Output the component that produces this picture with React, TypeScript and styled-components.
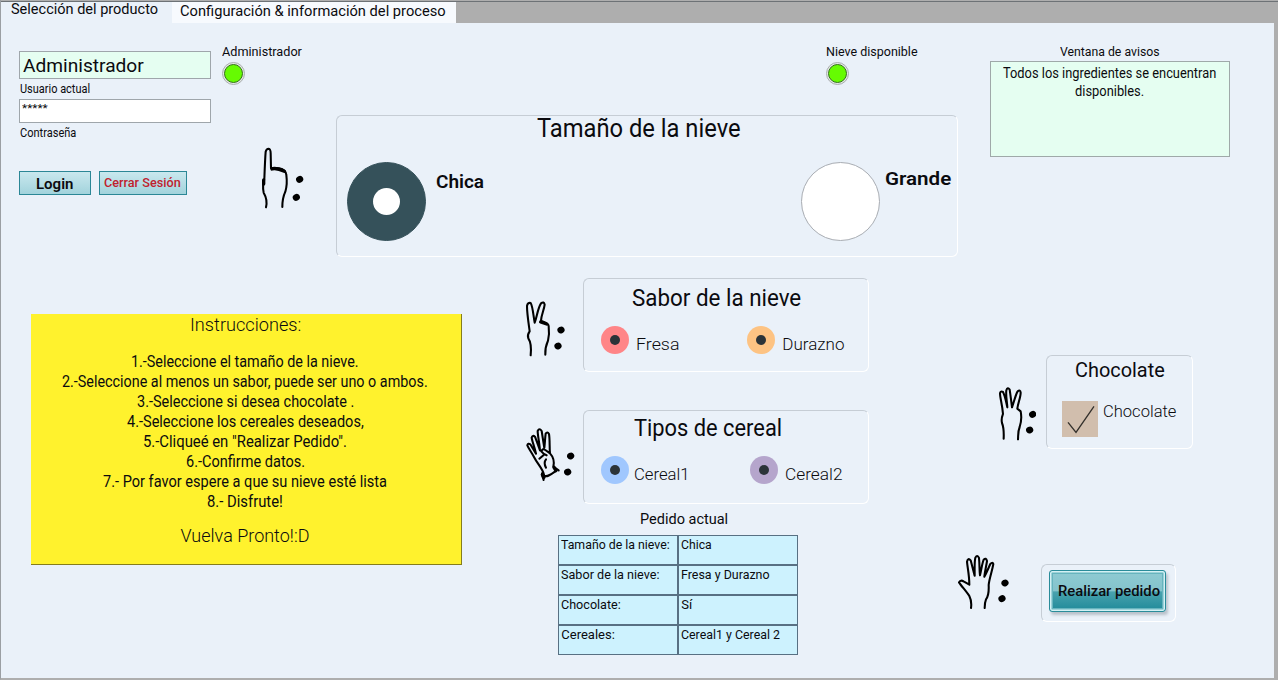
import React, { useLayoutEffect, useRef, useState } from 'react';
import styled, { createGlobalStyle } from 'styled-components';

const GlobalStyle = createGlobalStyle`
  *, *::before { box-sizing: border-box; }
  body {
    margin: 0;
    background: #ffffff;
    color: #0b0b0f;
    font-family: Roboto, "Liberation Sans", sans-serif;
    overflow: hidden;
  }
  button { font-family: inherit; }
`;

/* ---------- text fitted to a label width ---------- */

const LabelBox = styled.span<{ $w: number; $lh: number; $size: number; $weight: number; $color: string }>`
  display: block;
  flex: none;
  width: ${p => p.$w}px;
  height: ${p => p.$lh}px;
  line-height: ${p => p.$lh}px;
  font-size: ${p => p.$size}px;
  font-weight: ${p => p.$weight};
  color: ${p => p.$color};
  text-align: left;
`;

const LabelInk = styled.span`
  display: inline-block;
  vertical-align: top;
  white-space: pre;
  transform-origin: 0 50%;
`;

type LabelProps = { children: string; w: number; lh: number; size: number; weight?: number; color?: string };

function Label({ children, w, lh, size, weight = 400, color = '#0b0b0f' }: LabelProps) {
  const ink = useRef<HTMLSpanElement>(null);
  const [scale, setScale] = useState(1);
  useLayoutEffect(() => {
    if (ink.current && ink.current.offsetWidth) {
      setScale(w / ink.current.offsetWidth);
    }
  }, [w, children]);
  return (
    <LabelBox $w={w} $lh={lh} $size={size} $weight={weight} $color={color}>
      <LabelInk ref={ink} style={{ transform: `scaleX(${scale})` }}>{children}</LabelInk>
    </LabelBox>
  );
}

/* ---------- window and tabs ---------- */

const Window = styled.div`
  width: 1278px;
  height: 681px;
  background: #fff;
`;

const TabBar = styled.nav`
  display: flex;
  height: 23px;
  padding-top: 1px;
  border-left: 1px solid #9b9fa3;
  background: #aeaeae;
`;

const Tab = styled.div<{ $w: number; $pad: number; $active?: boolean }>`
  width: ${p => p.$w}px;
  height: 22px;
  border-top: 1px solid #6d7276;
  padding-left: ${p => p.$pad}px;
  background: ${p => (p.$active ? '#eaf1f9' : '#f7fafe')};
  overflow: hidden;
`;

const TabRest = styled.div`
  flex: 1;
  border-top: 1px solid #6d7276;
`;

const Body = styled.main`
  height: 657px;
  border: solid #aeaeae;
  border-width: 0 4px 2px 1px;
  border-left-color: #9b9fa3;
  background: #eaf1f9;
`;

const UpperArea = styled.div`
  display: flex;
  align-items: flex-start;
  height: 234px;
  padding-left: 18px;
`;

const LowerArea = styled.div`
  display: flex;
  align-items: flex-start;
  padding-left: 30px;
`;

/* ---------- session ---------- */

const LoginColumn = styled.section`
  width: 192px;
  padding-top: 28px;
`;

const Field = styled.div<{ $h: number; $green?: boolean; $pad: string }>`
  height: ${p => p.$h}px;
  padding: ${p => p.$pad};
  border: 1px solid #9fa6ab;
  background: ${p => (p.$green ? '#e5fef1' : '#fff')};
`;

const Caption = styled.div`
  padding-left: 1.3px;
`;

const ButtonRow = styled.div`
  display: flex;
  gap: 8px;
  margin-top: 29px;
`;

const SessionButton = styled.button<{ $w: number; $drop: number }>`
  display: flex;
  justify-content: center;
  align-items: center;
  width: ${p => p.$w}px;
  height: 24px;
  padding: ${p => p.$drop}px 1px 0 0;
  border: 1px solid #2b8796;
  background: linear-gradient(#c9e8ee, #a2d3dc);
`;

/* ---------- indicators ---------- */

const StatusColumn = styled.section`
  width: 114px;
  margin-left: 11px;
  padding-top: 21px;
`;

const Indicator = styled.div`
  padding-left: 0;
`;

const Led = styled.div`
  width: 23px;
  height: 23px;
  margin-top: 2px;
  padding: 1px;
  border: 1px solid #a9adb0;
  border-radius: 50%;
  background: #e4e9e4;

  &::before {
    content: '';
    display: block;
    width: 19px;
    height: 19px;
    border: 1px solid #33701a;
    border-radius: 50%;
    background: #66fb02;
  }
`;

/* ---------- group panels ---------- */

const Panel = styled.section<{ $w: number; $h: number }>`
  flex: none;
  width: ${p => p.$w}px;
  height: ${p => p.$h}px;
  border: 1px solid;
  border-color: #c6cdd5 #fff #fff #c6cdd5;
  border-radius: 6px;
`;

const PanelTitle = styled.div<{ $left: number }>`
  padding-left: ${p => p.$left}px;
`;

const SizeColumn = styled.div`
  width: 622px;
  padding-top: 21px;
`;

const SnowIndicator = styled(Indicator)`
  height: 71px;
  padding-left: 490px;
`;

const SizeOptions = styled.div`
  display: flex;
  justify-content: space-between;
  margin-top: 20px;
  padding: 0 6px 0 10px;
`;

const Option = styled.div<{ $gap: number; $drop: number; $left?: number }>`
  display: flex;
  align-items: flex-start;
  gap: ${p => p.$gap}px;
  margin-left: ${p => p.$left ?? 0}px;

  > span { margin-top: ${p => p.$drop}px; }
`;

const BigRadio = styled.div<{ $on?: boolean }>`
  display: grid;
  place-items: center;
  width: 79px;
  height: 79px;
  border: 1px solid ${p => (p.$on ? '#35515a' : '#a9adb3')};
  border-radius: 50%;
  background: ${p => (p.$on ? '#35515a' : '#fff')};

  &::before {
    content: '';
    width: 27px;
    height: 27px;
    border-radius: 50%;
    background: #fff;
  }
`;

const SmallRadio = styled.div<{ $color: string }>`
  display: grid;
  place-items: center;
  width: 28px;
  height: 28px;
  border-radius: 50%;
  background: ${p => p.$color};

  &::before {
    content: '';
    width: 10px;
    height: 10px;
    border-radius: 50%;
    background: #2b3338;
  }
`;

const OptionRow = styled.div<{ $top: number; $left: number }>`
  display: flex;
  margin-top: ${p => p.$top}px;
  padding-left: ${p => p.$left}px;
`;

/* ---------- notices ---------- */

const NoticeColumn = styled.section`
  display: flex;
  flex-direction: column;
  align-items: center;
  width: 240px;
  margin-left: 32px;
  padding-top: 21px;
`;

const NoticeBox = styled.div`
  display: flex;
  flex-direction: column;
  align-items: center;
  width: 240px;
  height: 96px;
  margin-top: 1px;
  padding: 2px 2px 0 0;
  border: 1px solid #9fa9a9;
  background: #e5fef1;
`;

/* ---------- instructions ---------- */

const Instructions = styled.section`
  display: flex;
  flex-direction: column;
  align-items: center;
  flex: none;
  width: 431px;
  height: 251px;
  margin-top: 57px;
  padding-right: 2px;
  border: solid #857d1b;
  border-width: 0 1px 1px 0;
  background: #fff22d;
`;

const Steps = styled.div`
  display: flex;
  flex-direction: column;
  align-items: center;
  margin: 17px 0 13px;
`;

/* ---------- centre and right columns ---------- */

const CenterColumn = styled.div`
  width: 345px;
  margin-left: 62.7px;
  padding-top: 21px;
`;

const RightColumn = styled.div`
  margin-left: 87px;
  padding-top: 98px;
`;

const StepRow = styled.div<{ $top?: number; $left?: number }>`
  display: flex;
  align-items: flex-start;
  margin-top: ${p => p.$top ?? 0}px;
  margin-left: ${p => p.$left ?? 0}px;
`;

const HandSlot = styled.div<{ $w: number; $top: number; $left?: number }>`
  flex: none;
  width: ${p => p.$w}px;
  padding: ${p => p.$top}px 0 0 ${p => p.$left ?? 0}px;

  svg { display: block; }
`;

const OrderTitle = styled.div`
  padding: 5.4px 0 6.1px 115.2px;
`;

const OrderTable = styled.div`
  display: grid;
  grid-template-columns: 120px 120px;
  grid-auto-rows: 30px;
  width: 240px;
  margin-left: 33.3px;
`;

const Cell = styled.div`
  padding-left: 2.3px;
  border: 1px solid #587083;
  background: #cdf2fe;
`;

const Checkbox = styled.div`
  width: 36px;
  height: 36px;
  background: #d1bead;

  svg { display: block; }
`;

const OrderButton = styled.button`
  display: flex;
  justify-content: center;
  align-items: center;
  width: 117px;
  height: 42px;
  margin: 5px 0 0 7px;
  padding: 0 0 0 3px;
  border: 1px solid #2a8c9a;
  border-radius: 3px;
  background: linear-gradient(#8fcbd3 0%, #84c3cc 50%, #49a2ae 52%, #1f8a99 100%);
  box-shadow: inset 0 0 0 1.5px #d3f1f4, inset 0 0 0 3px #67b4be, 2px 3px 3px #b9c1ca;
`;

/* ---------- hand drawings ---------- */

type HandProps = { box: [number, number, number, number]; lines: string; heavy?: string; dots: [number, number][] };

function Hand({ box, lines, heavy, dots }: HandProps) {
  return (
    <svg width={box[2] / 3} height={box[3] / 3} viewBox={box.join(' ')} fill="none" stroke="#000" strokeLinecap="round" strokeLinejoin="round">
      <path d={lines} strokeWidth="6.2" />
      {heavy && <path d={heavy} strokeWidth="10" />}
      {dots.map(([x, y]) => (
        <ellipse key={y} cx={x} cy={y} rx="11" ry="10" fill="#000" stroke="none" transform={`rotate(-30 ${x} ${y})`} />
      ))}
    </svg>
  );
}

const OneFinger = () => (
  <Hand
    box={[60, 138, 135, 192]}
    lines="M78 322C82 305 78 290 71 278C68 262 68 250 73 238C74 210 75 180 77 155Q79 146 86 146Q92 147 92 160L93 205C100 202 108 203 118 205C128 207 138 213 139 225C141 240 141 258 136 275C129 290 127 305 127 321"
    heavy="M96 207C106 204 120 208 133 214M71 240L71 252"
    dots={[[179, 238], [169, 292]]}
  />
);

const TwoFingers = () => (
  <Hand
    box={[74, 90, 123, 174]}
    lines="M91 256C93 235 91 215 84 205C80 195 84 190 88 184C84 155 80 130 80 108Q82 97 91 99C97 108 99 135 103 158C110 140 112 115 122 100Q131 93 133 104C131 120 123 135 122 152C130 157 144 158 145 168C147 185 146 200 143 212C136 228 134 240 135 254"
    heavy="M121 156L139 162"
    dots={[[182, 180], [173, 228]]}
  />
);

const ThreeFingers = () => (
  <Hand
    box={[18, 14, 116, 166]}
    lines="M35 172C36 150 34 135 30 125C27 112 30 106 33 98C31 70 24 50 24 36Q26 28 33 32C40 45 42 62 46 78C45 60 41 42 43 27Q47 16 53 25C56 45 58 62 60 78C66 62 70 42 77 30Q85 24 86 34C86 48 78 65 76 82L86 90C90 110 88 122 83 137C77 152 79 162 78 174"
    dots={[[122, 99], [113, 146]]}
  />
);

const FourFingers = () => (
  <Hand
    box={[15, 15, 150, 165]}
    lines="M72 158C68 140 52 125 42 105C34 90 26 80 22 70Q24 62 31 67L48 95C44 75 36 58 35 47Q38 38 45 44L60 85C58 60 53 40 53 27Q58 17 65 27L73 78C75 60 75 50 77 35Q82 27 87 36C90 55 88 75 90 94M64 88Q68 78 76 84L90 94C100 105 104 118 100 134L116 145M64 88Q72 98 80 100M58 110L72 98M78 112Q70 122 78 137M71 160C80 168 92 158 106 148M66 154C64 162 70 166 71 174"
    heavy="M102 136L108 146M67 158L72 166"
    dots={[[152, 102], [143, 150]]}
  />
);

const OpenHand = () => (
  <Hand
    box={[17, 12, 156, 166]}
    lines="M59 174C61 160 60 150 54 138C46 125 30 108 23 97Q27 88 38 95L54 104C54 75 48 50 47 35Q50 22 58 31L70 77C70 55 69 35 72 23Q78 13 83 24C85 45 84 62 86 76C90 60 92 42 97 29Q104 22 107 33C105 48 101 62 99 80C106 68 111 55 117 42Q124 34 126 42C122 65 114 85 112 105C113 125 112 138 104 148C100 158 100 165 100 174"
    dots={[[161, 99], [152, 146]]}
  />
);

/* ---------- data ---------- */

const steps: [string, number][] = [
  ['1.-Seleccione el tamaño de la nieve.', 228],
  ['2.-Seleccione al menos un sabor, puede ser uno o ambos.', 366],
  ['3.-Seleccione si desea chocolate .', 217],
  ['4.-Seleccione los cereales deseados,', 237],
  ['5.-Cliqueé en "Realizar Pedido".', 204],
  ['6.-Confirme datos.', 119],
  ['7.- Por favor espere a que su nieve esté lista', 284],
  ['8.- Disfrute!', 76],
];

const order: [string, number][] = [
  ['Tamaño de la nieve:', 109],
  ['Chica', 31],
  ['Sabor de la nieve:', 98],
  ['Fresa y Durazno', 89],
  ['Chocolate:', 60],
  ['Sí', 11],
  ['Cereales:', 54],
  ['Cereal1 y Cereal 2', 99],
];

export default function App() {
  return (
    <Window>
      <GlobalStyle />
      <TabBar>
        <Tab $w={171} $pad={10} $active>
          <Label w={147} lh={14} size={15.5}>Selección del producto</Label>
        </Tab>
        <Tab $w={284} $pad={8}>
          <Label w={266} lh={18} size={15.5}>Configuración &amp; información del proceso</Label>
        </Tab>
        <TabRest />
      </TabBar>

      <Body>
        <UpperArea>
          <LoginColumn>
            <Field $h={28} $green $pad="1px 0 0 3.2px">
              <Label w={121} lh={26} size={18.5}>Administrador</Label>
            </Field>
            <Caption><Label w={70} lh={20} size={13}>Usuario actual</Label></Caption>
            <Field $h={24} $pad="0 0 0 2px">
              <Label w={26} lh={17} size={11}>*****</Label>
            </Field>
            <Caption><Label w={56} lh={19} size={13}>Contraseña</Label></Caption>
            <ButtonRow>
              <SessionButton $w={72} $drop={2}>
                <Label w={37} lh={20} size={15} weight={600}>Login</Label>
              </SessionButton>
              <SessionButton $w={88} $drop={0}>
                <Label w={77} lh={20} size={13} weight={500} color="#c0222e">Cerrar Sesión</Label>
              </SessionButton>
            </ButtonRow>
          </LoginColumn>

          <StatusColumn>
            <Indicator>
              <Label w={80} lh={16} size={12.5}>Administrador</Label>
              <Led />
            </Indicator>
            <HandSlot $w={114} $top={61} $left={38}><OneFinger /></HandSlot>
          </StatusColumn>

          <SizeColumn>
            <SnowIndicator>
              <Label w={92} lh={16} size={12.5}>Nieve disponible</Label>
              <Led />
            </SnowIndicator>
            <Panel $w={622} $h={142}>
              <PanelTitle $left={200}><Label w={204} lh={26} size={25}>Tamaño de la nieve</Label></PanelTitle>
              <SizeOptions>
                <Option $gap={10} $drop={8}>
                  <BigRadio $on />
                  <Label w={48} lh={24} size={19} weight={600}>Chica</Label>
                </Option>
                <Option $gap={5} $drop={5}>
                  <BigRadio />
                  <Label w={66} lh={24} size={19} weight={600}>Grande</Label>
                </Option>
              </SizeOptions>
            </Panel>
          </SizeColumn>

          <NoticeColumn>
            <Label w={100} lh={16} size={12.5}>Ventana de avisos</Label>
            <NoticeBox>
              <Label w={213} lh={18} size={15.5}>Todos los ingredientes se encuentran</Label>
              <Label w={69} lh={18} size={15.5}>disponibles.</Label>
            </NoticeBox>
          </NoticeColumn>
        </UpperArea>

        <LowerArea>
          <Instructions>
            <Label w={111} lh={21} size={18} weight={350}>Instrucciones:</Label>
            <Steps>
              {steps.map(([text, w]) => (
                <Label key={text} w={w} lh={20} size={16}>{text}</Label>
              ))}
            </Steps>
            <Label w={129} lh={22} size={18} weight={350}>Vuelva Pronto!:D</Label>
          </Instructions>

          <CenterColumn>
            <StepRow>
              <HandSlot $w={58.3} $top={22}><TwoFingers /></HandSlot>
              <Panel $w={286} $h={94}>
                <PanelTitle $left={48.4}><Label w={169} lh={37} size={24.5}>Sabor de la nieve</Label></PanelTitle>
                <OptionRow $top={10} $left={17}>
                  <Option $gap={7.3} $drop={4.2}>
                    <SmallRadio $color="#ff8587" />
                    <Label w={43} lh={28} size={17} weight={350}>Fresa</Label>
                  </Option>
                  <Option $gap={7.3} $drop={4.2} $left={67.7}>
                    <SmallRadio $color="#fdc383" />
                    <Label w={62} lh={28} size={17} weight={350}>Durazno</Label>
                  </Option>
                </OptionRow>
              </Panel>
            </StepRow>

            <StepRow $top={38}>
              <HandSlot $w={58.3} $top={17}><FourFingers /></HandSlot>
              <Panel $w={286} $h={93.5}>
                <PanelTitle $left={50.4}><Label w={148} lh={33} size={24.5}>Tipos de cereal</Label></PanelTitle>
                <OptionRow $top={12} $left={17}>
                  <Option $gap={5} $drop={4.2}>
                    <SmallRadio $color="#a0c7fe" />
                    <Label w={56} lh={28} size={17} weight={350}>Cereal1</Label>
                  </Option>
                  <Option $gap={7} $drop={4.2} $left={60}>
                    <SmallRadio $color="#b5a5cc" />
                    <Label w={58} lh={28} size={17} weight={350}>Cereal2</Label>
                  </Option>
                </OptionRow>
              </Panel>
            </StepRow>

            <OrderTitle><Label w={88} lh={20} size={15}>Pedido actual</Label></OrderTitle>
            <OrderTable>
              {order.map(([text, w]) => (
                <Cell key={text}><Label w={w} lh={18} size={13}>{text}</Label></Cell>
              ))}
            </OrderTable>
          </CenterColumn>

          <RightColumn>
            <StepRow $left={41}>
              <HandSlot $w={48.3} $top={31}><ThreeFingers /></HandSlot>
              <Panel $w={147} $h={94}>
                <PanelTitle $left={28}><Label w={90} lh={28} size={21} weight={450}>Chocolate</Label></PanelTitle>
                <OptionRow $top={17} $left={15}>
                  <Option $gap={5.3} $drop={0}>
                    <Checkbox>
                      <svg width="36" height="36" viewBox="0 0 108 108" fill="none" stroke="#33302c" strokeWidth="4">
                        <path d="M18 64L42 94L96 16" />
                      </svg>
                    </Checkbox>
                    <Label w={73} lh={20} size={17} weight={350}>Chocolate</Label>
                  </Option>
                </OptionRow>
              </Panel>
            </StepRow>

            <StepRow $top={105}>
              <HandSlot $w={84} $top={0}><OpenHand /></HandSlot>
              <StepRow $top={10}>
                <Panel $w={135} $h={58}>
                  <OrderButton>
                    <Label w={102} lh={20} size={15.5} weight={500}>Realizar pedido</Label>
                  </OrderButton>
                </Panel>
              </StepRow>
            </StepRow>
          </RightColumn>
        </LowerArea>
      </Body>
    </Window>
  );
}
